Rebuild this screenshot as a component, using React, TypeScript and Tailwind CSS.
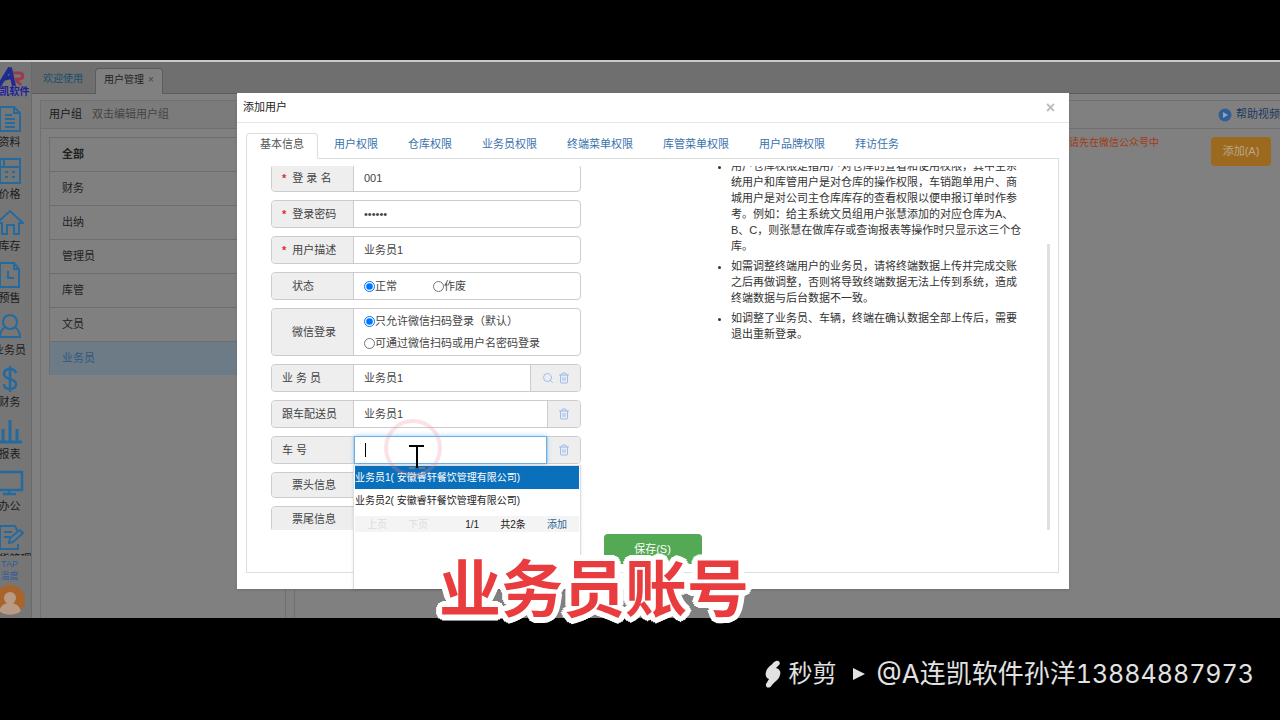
import React from 'react';
import { Search, Trash2 } from 'lucide-react';

const sideItems = [
  { label: '资料', icon: 'doc' },
  { label: '价格', icon: 'calc' },
  { label: '库存', icon: 'home' },
  { label: '预售', icon: 'clock' },
  { label: '业务员', icon: 'user' },
  { label: '财务', icon: 'dollar' },
  { label: '报表', icon: 'chart' },
  { label: '办公', icon: 'screen' },
];

const groups = ['全部', '财务', '出纳', '管理员', '库管', '文员', '业务员'];

const tabs = ['基本信息', '用户权限', '仓库权限', '业务员权限', '终端菜单权限', '库管菜单权限', '用户品牌权限', '拜访任务'];

const tips = [
  '用户仓库权限是指用户对仓库的查看和使用权限，其中主系统用户和库管用户是对仓库的操作权限，车销跑单用户、商城用户是对公司主仓库库存的查看权限以便申报订单时作参考。例如：给主系统文员组用户张慧添加的对应仓库为A、B、C，则张慧在做库存或查询报表等操作时只显示这三个仓库。',
  '如需调整终端用户的业务员，请将终端数据上传并完成交账之后再做调整，否则将导致终端数据无法上传到系统，造成终端数据与后台数据不一致。',
  '如调整了业务员、车辆，终端在确认数据全部上传后，需要退出重新登录。',
];

const SideIcon = ({ name }: { name: string }) => (
  <svg viewBox="0 0 28 28" className="h-7 w-7 shrink-0" fill="none" stroke="currentColor" strokeWidth="2">
    {name === 'doc' && <path d="M4 2h14l6 6v18H4zM18 2v6h6M9 10h7M9 14h10M9 18h10M9 22h10" />}
    {name === 'calc' && <path d="M4 2h20v24H4zM4 10h20M8 3v6M9 15h3M16 15h3M9 20h3M16 20h3" />}
    {name === 'home' && <path d="M1 14L14 2l13 12h-4v11h-5v-9h-7v9H6V14z" />}
    {name === 'clock' && <path d="M4 2h14l5 6v18H4zM18 2v6h5M12 10v7h6" />}
    {name === 'user' && (
      <>
        <circle cx="14" cy="9" r="7" />
        <path d="M9 14c-4 3-5 6-5 10h20c0-4-1-7-5-10" />
      </>
    )}
    {name === 'dollar' && (
      <path d="M14 1v26M20 8c-1-3-3-4-6-4-4 0-6 2-6 5s3 4 6 5 6 2 6 5-2 5-6 5-6-2-6-5" strokeWidth="2.5" />
    )}
    {name === 'chart' && <path d="M7 25V12M14 25V3M21 25V12M2 25h24" strokeWidth="3" />}
    {name === 'screen' && <path d="M1 3h25v18H1zM13 21v4M7 25h13" strokeWidth="2.5" />}
    {name === 'edit' && <path d="M22 9l-3-6H4v23h18v-5M8 9h8M8 14h6M13 20l1-5 10-8 3 3-10 9z" />}
  </svg>
);

const Sidebar = () => (
  <aside className="w-8 shrink-0 overflow-hidden border-r border-[#6a6a6a] bg-[#767676]">
    <div className="-ml-3 flex flex-col items-center">
      <svg viewBox="0 0 30 24" className="h-6 w-8 shrink-0" fill="none" strokeWidth="4" strokeLinejoin="bevel">
        <path d="M4 24L15 6l4 18M8 17l8-2" stroke="#1d2c8e" />
        <path d="M18 11h6c5 0 5 6 0 6h-4l6 6" stroke="#9a3a4c" strokeWidth="3" />
      </svg>
      <b className="mb-[7px] text-[10px] leading-3 whitespace-nowrap text-[#20209a]">连凯软件</b>
      {sideItems.map((item) => (
        <a key={item.label} href="#" className="flex h-13 shrink-0 flex-col items-center text-[#256a9e]">
          <SideIcon name={item.icon} />
          <span className="mt-px text-[11px] leading-4 whitespace-nowrap text-[#1c1c1c]">{item.label}</span>
        </a>
      ))}
      <a href="#" className="flex h-[35px] shrink-0 flex-col items-center overflow-hidden pt-0.5 text-[#256a9e]">
        <SideIcon name="edit" />
        <span className="text-[11px] leading-4 whitespace-nowrap text-[#1c1c1c]">订货管理</span>
      </a>
      <a href="#" className="my-0.5 text-center text-[9px] leading-[12px] text-[#2b5c9c]">
        TAP
        <br />
        温度
      </a>
      <svg viewBox="0 0 32 32" className="h-8 w-8 shrink-0">
        <circle cx="16" cy="16" r="15" fill="#a8642a" />
        <circle cx="16" cy="14" r="6" fill="#b99a86" />
        <path d="M5 27c2-6 6-8 11-8s9 2 11 8c-6 5-16 5-22 0z" fill="#b99a86" />
      </svg>
    </div>
  </aside>
);

const Workspace = () => (
  <div className="flex min-w-0 flex-1 flex-col">
    <nav className="flex h-8 shrink-0 items-end border-b border-[#5c5c5c] bg-[#6f6f6f] pl-[11px] text-[10px]">
      <a href="#" className="pb-2 leading-3 text-[#164f6c]">欢迎使用</a>
      <div className="-mb-px ml-3 flex h-[26px] items-center gap-1 rounded-t border border-b-0 border-[#5c5c5c] bg-[#808080] px-2 pb-1 text-[#222]">
        用户管理
        <button aria-label="关闭" className="text-[10px] text-[#444]">×</button>
      </div>
    </nav>
    <div className="flex flex-1 gap-2 pt-1.5 pl-2">
      <section className="w-[246px] shrink-0 border border-b-0 border-[#707070]">
        <h2 className="flex h-7 items-center gap-2.5 border-b border-[#707070] bg-[#7b7b7b] pl-2 text-[11px] text-[#191919]">
          用户组 <small className="text-[11px] text-[#444]">双击编辑用户组</small>
        </h2>
        <ul className="mt-2 ml-2 border-l border-[#6e6e6e] text-[11px] text-[#222]">
          {groups.map((g, i) => (
            <li
              key={g}
              className={`flex h-[34px] items-center border-t border-[#6e6e6e] pl-3 ${i === 0 ? 'font-bold' : ''} ${i === 6 ? 'bg-[#6c7b86] text-[#31597d]' : ''}`}
            >
              {g}
            </li>
          ))}
        </ul>
      </section>
      <section className="min-w-0 flex-1 border-t border-l border-[#707070]">
        <div className="flex h-7 items-center justify-end gap-1 border-b border-[#707070] text-[11px] text-[#1e3a5f]">
          <svg viewBox="0 0 14 14" className="h-3.5 w-3.5">
            <circle cx="7" cy="7" r="6.5" fill="#315f94" />
            <path d="M5 4l5 3-5 3z" fill="#8ea6c2" />
          </svg>
          <a href="#" className="whitespace-nowrap">帮助视频</a>
        </div>
        <div className="flex items-start justify-end pt-2 pr-[9px] text-[10px]">
          <span className="mr-13 leading-3 text-[#a33a12]">请先在微信公众号中</span>
          <button className="h-[29px] w-15 rounded bg-[#9c6a1e] text-[11px] text-[#b9a78c]">添加(A)</button>
        </div>
      </section>
    </div>
  </div>
);

type FieldProps = {
  label: string;
  id?: string;
  required?: boolean;
  inset?: boolean;
  size?: string;
  children?: React.ReactNode;
};

const Field = ({ label, id, required, inset, size = 'h-7', children }: FieldProps) => (
  <div className={`flex w-[310px] shrink-0 rounded border border-[#ccc] bg-white ${size}`}>
    <label
      htmlFor={id}
      className={`flex w-[82px] shrink-0 items-center rounded-l border-r border-[#ccc] bg-[#eee] whitespace-pre ${inset ? 'pl-5' : 'pl-2.5'}`}
    >
      {required && <b className="mr-1.5 text-[#d9302c]">*</b>}
      {label}
    </label>
    {children}
  </div>
);

const inputClass = 'min-w-0 flex-1 bg-transparent px-2.5 outline-none';
const addonClass = 'flex shrink-0 items-center justify-center gap-1 rounded-r border-l border-[#ccc] bg-[#eee] text-[#9dbbed]';

const UserForm = () => (
  <form className="-mt-0.5 flex flex-col gap-2">
    <Field label="登 录 名" id="login" required>
      <input id="login" className={inputClass} defaultValue="001" />
    </Field>
    <Field label="登录密码" id="pwd" required>
      <input id="pwd" type="password" className={inputClass} defaultValue="123456" />
    </Field>
    <Field label="用户描述" id="desc" required>
      <input id="desc" className={inputClass} defaultValue="业务员1" />
    </Field>
    <Field label="状态" inset>
      <div className="flex items-center gap-9 pl-2.5">
        <label className="flex items-center">
          <input type="radio" name="state" defaultChecked className="h-[11px] w-[11px]" />正常
        </label>
        <label className="flex items-center">
          <input type="radio" name="state" className="h-[11px] w-[11px]" />作废
        </label>
      </div>
    </Field>
    <Field label="微信登录" inset size="h-12">
      <div className="flex flex-col justify-center gap-1.5 pl-2.5 leading-4">
        <label className="flex items-center">
          <input type="radio" name="wx" defaultChecked className="h-[11px] w-[11px]" />只允许微信扫码登录（默认）
        </label>
        <label className="flex items-center">
          <input type="radio" name="wx" className="h-[11px] w-[11px]" />可通过微信扫码或用户名密码登录
        </label>
      </div>
    </Field>
    <Field label="业 务 员" id="sales">
      <input id="sales" className={inputClass} defaultValue="业务员1" />
      <div className={`${addonClass} w-[50px]`}>
        <Search size={12} />
        <Trash2 size={12} />
      </div>
    </Field>
    <Field label="跟车配送员" id="delivery">
      <input id="delivery" className={inputClass} defaultValue="业务员1" />
      <div className={`${addonClass} w-[33px]`}>
        <Trash2 size={12} />
      </div>
    </Field>
    <Field label="车 号" id="car">
      <div className="relative -my-px flex min-w-0 flex-1 border border-[#66afe9] shadow-[0_0_5px_#9ccdf3]">
        <input id="car" className={inputClass} />
        <span className="absolute top-1.5 left-2.5 h-3.5 w-px bg-black" />
      </div>
      <div className={`${addonClass} w-[33px]`}>
        <Trash2 size={12} />
      </div>
    </Field>
    <Field label="票头信息" inset size="h-[26px]" />
    <Field label="票尾信息" inset size="h-[26px]" />
  </form>
);

const CarOptions = () => (
  <div className="absolute top-[372px] left-[116px] h-[124px] w-[228px] border border-b-0 border-[#ddd] bg-white px-px text-[10px] text-[#222] shadow">
    <ul>
      <li className="flex h-[23px] items-center bg-[#0a70bb] text-white">业务员1( 安徽睿轩餐饮管理有限公司)</li>
      <li className="flex h-[23px] items-center">业务员2( 安徽睿轩餐饮管理有限公司)</li>
    </ul>
    <div className="mt-1 flex h-4 items-center justify-between bg-[#f4f4f4] pr-3 pl-3">
      <span className="text-[#ddd]">上页</span>
      <span className="text-[#ddd]">下页</span>
      <span className="ml-4">1/1</span>
      <span>共2条</span>
      <a href="#" className="text-[#2a6496]">添加</a>
    </div>
  </div>
);

const Pointer = () => (
  <svg viewBox="0 0 60 60" className="absolute top-[326px] left-[146px] h-[60px] w-[60px]" fill="none">
    <circle cx="30" cy="29" r="27" stroke="#f08a9a" strokeOpacity="0.25" strokeWidth="4" />
    <path d="M26 49h6M36 49h6" stroke="#777" strokeWidth="2" />
    <path d="M26 27h15M34 27v22" stroke="#000" strokeWidth="2" />
  </svg>
);

const UserDialog = () => (
  <div className="absolute inset-0 flex items-start justify-center overflow-hidden pt-[31px] pl-[26px]">
    <div role="dialog" aria-label="添加用户" className="relative w-[832px] bg-white pb-4 text-[11px] text-[#444] shadow">
      <header className="flex h-[30px] items-center justify-between border-b border-[#e5e5e5] pr-3.5 pl-1.5">
        <h1 className="text-[#222]">添加用户</h1>
        <button aria-label="关闭" className="text-base leading-4 font-bold text-[#bbb]">×</button>
      </header>
      <nav className="mt-2.5 mr-2.5 ml-[9px] flex gap-0.5">
        {tabs.map((tab, i) => (
          <a
            key={tab}
            href="#"
            className={`flex h-[26px] items-center rounded-t border px-[13px] pb-[3px] ${i === 0 ? 'relative -mb-px border-[#ddd] border-b-white bg-white text-[#555]' : 'border-transparent text-[#3873ab]'}`}
          >
            {tab}
          </a>
        ))}
      </nav>
      <div className="mr-2.5 ml-[9px] -mt-px border border-[#ddd] pt-[7px] pb-2">
        <div className="flex h-[364px] justify-between overflow-hidden pl-6">
          <UserForm />
          <div className="flex">
            <ul className="-mt-2 flex w-[291px] list-disc flex-col gap-1 text-[11px] leading-4 text-[#333]">
              {tips.map((tip) => (
                <li key={tip}>{tip}</li>
              ))}
            </ul>
            <div className="mt-[78px] mr-2 ml-[25px] w-[3px] bg-[#e0e0e0]" />
          </div>
        </div>
        <button className="mx-auto mt-1 block h-[30px] w-[98px] rounded bg-[#54a954] text-white">保存(S)</button>
      </div>
      <CarOptions />
      <Pointer />
    </div>
  </div>
);

const App: React.FC = () => {
  return (
    <div className="flex min-h-screen flex-col overflow-hidden bg-black font-['Liberation_Sans','Noto_Sans_CJK_SC',sans-serif]">
      <main className="relative mt-[60px] flex flex-1 overflow-hidden border-t-2 border-[#c8c8c8] bg-[#808080]">
        <Sidebar />
        <Workspace />
        <UserDialog />
      </main>
      <footer className="relative flex h-[102px] items-center justify-end pt-2.5 pr-[26px] text-[26px] text-[#e2e2e2]">
        <p className="absolute -top-[79px] left-[439px] font-['Noto_Sans_CJK_SC',sans-serif] text-[62px] font-bold whitespace-nowrap text-[#e93c3e] [text-shadow:6px_0_#fff,5px_2px_#fff,4px_4px_#fff,2px_5px_#fff,0_6px_#fff,-2px_5px_#fff,-4px_4px_#fff,-5px_2px_#fff,-6px_0_#fff,-5px_-2px_#fff,-4px_-4px_#fff,-2px_-5px_#fff,0_-6px_#fff,2px_-5px_#fff,4px_-4px_#fff,5px_-2px_#fff,2px_2px_#fff,-2px_2px_#fff,-2px_-2px_#fff,2px_-2px_#fff]">
          业务员账号
        </p>
        <svg viewBox="0 0 16 28" className="mr-2 h-7 w-4" fill="currentColor">
          <path d="M11 1c3-1 5 2 3 4l-3 3c4 1 5 4 4 7-1 5-6 7-8 10-2 4-7 3-6-1l3-5c-3-1-4-4-3-7 1-5 6-7 8-10z" />
        </svg>
        <span className="text-2xl">秒剪</span>
        <svg viewBox="0 0 12 12" className="mr-3 ml-4 h-3 w-3" fill="currentColor">
          <path d="M0 0l12 6-12 6z" />
        </svg>
        <span className="font-['Inter','Noto_Sans_CJK_SC',sans-serif] tabular-nums">
          @A连凯软件孙洋<span className="text-[25px]">13884887973</span>
        </span>
      </footer>
    </div>
  );
};

export default App;
